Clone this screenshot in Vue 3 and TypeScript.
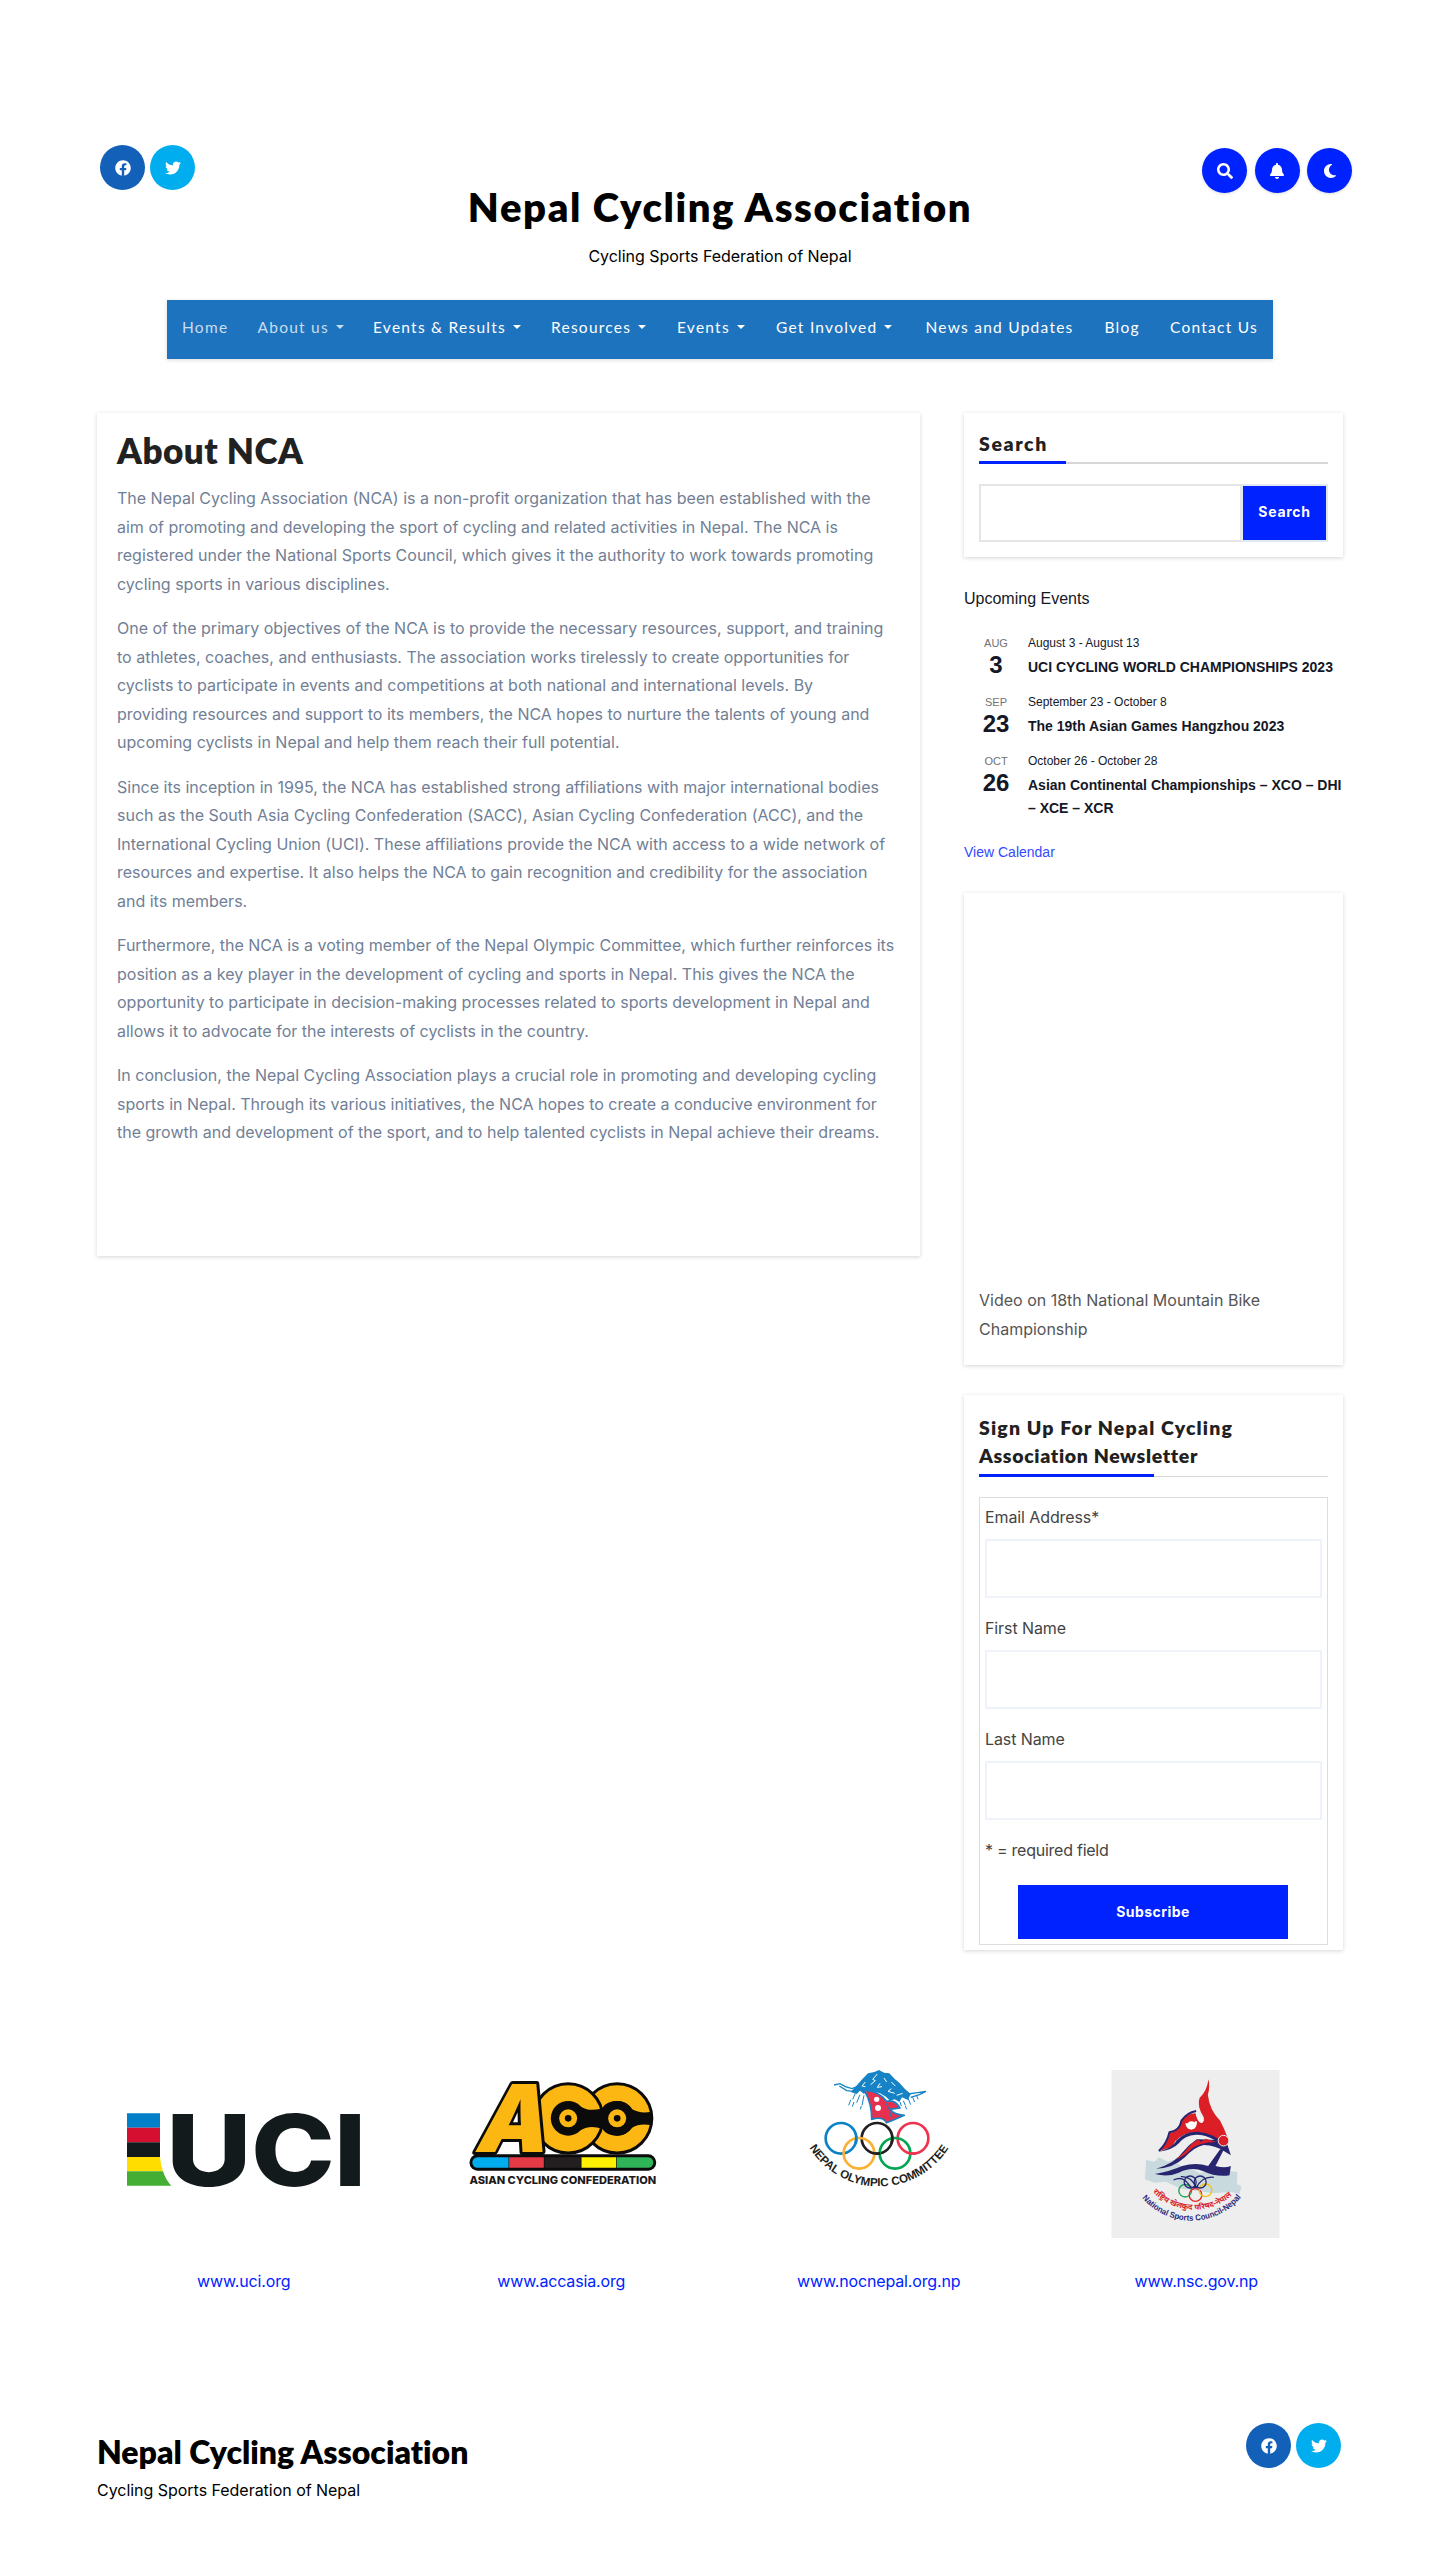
<script setup lang="ts">
interface NavItem { label: string; menu?: boolean; muted?: boolean }
interface EventItem { month: string; day: number; dates: string; title: string }
interface Field { id: string; label: string }

const navItems: NavItem[] = [
  { label: 'Home', muted: true },
  { label: 'About us', menu: true, muted: true },
  { label: 'Events & Results', menu: true },
  { label: 'Resources', menu: true },
  { label: 'Events', menu: true },
  { label: 'Get Involved', menu: true },
  { label: 'News and Updates' },
  { label: 'Blog' },
  { label: 'Contact Us' },
]

const paragraphs: string[][] = [
  [
    'The Nepal Cycling Association (NCA) is a non-profit organization that has been established with the',
    'aim of promoting and developing the sport of cycling and related activities in Nepal. The NCA is',
    'registered under the National Sports Council, which gives it the authority to work towards promoting',
    'cycling sports in various disciplines.',
  ],
  [
    'One of the primary objectives of the NCA is to provide the necessary resources, support, and training',
    'to athletes, coaches, and enthusiasts. The association works tirelessly to create opportunities for',
    'cyclists to participate in events and competitions at both national and international levels. By',
    'providing resources and support to its members, the NCA hopes to nurture the talents of young and',
    'upcoming cyclists in Nepal and help them reach their full potential.',
  ],
  [
    'Since its inception in 1995, the NCA has established strong affiliations with major international bodies',
    'such as the South Asia Cycling Confederation (SACC), Asian Cycling Confederation (ACC), and the',
    'International Cycling Union (UCI). These affiliations provide the NCA with access to a wide network of',
    'resources and expertise. It also helps the NCA to gain recognition and credibility for the association',
    'and its members.',
  ],
  [
    'Furthermore, the NCA is a voting member of the Nepal Olympic Committee, which further reinforces its',
    'position as a key player in the development of cycling and sports in Nepal. This gives the NCA the',
    'opportunity to participate in decision-making processes related to sports development in Nepal and',
    'allows it to advocate for the interests of cyclists in the country.',
  ],
  [
    'In conclusion, the Nepal Cycling Association plays a crucial role in promoting and developing cycling',
    'sports in Nepal. Through its various initiatives, the NCA hopes to create a conducive environment for',
    'the growth and development of the sport, and to help talented cyclists in Nepal achieve their dreams.',
  ],
]

const events: EventItem[] = [
  { month: 'AUG', day: 3, dates: 'August 3 - August 13', title: 'UCI CYCLING WORLD CHAMPIONSHIPS 2023' },
  { month: 'SEP', day: 23, dates: 'September 23 - October 8', title: 'The 19th Asian Games Hangzhou 2023' },
  { month: 'OCT', day: 26, dates: 'October 26 - October 28', title: 'Asian Continental Championships – XCO – DHI – XCE – XCR' },
]

const fields: Field[] = [
  { id: 'email', label: 'Email Address*' },
  { id: 'first', label: 'First Name' },
  { id: 'last', label: 'Last Name' },
]

const icons = {
  facebook: 'M504 256C504 119 393 8 256 8S8 119 8 256c0 123.78 90.69 226.38 209.25 245V327.69h-63V256h63v-54.64c0-62.15 37-96.48 93.67-96.48 27.14 0 55.52 4.84 55.52 4.84v61h-31.28c-30.8 0-40.41 19.12-40.41 38.73V256h68.78l-11 71.69h-57.78V501C413.31 482.38 504 379.78 504 256z',
  twitter: 'M459.37 151.716c.325 4.548.325 9.097.325 13.645 0 138.72-105.583 298.558-298.558 298.558-59.452 0-114.68-17.219-161.137-47.106 8.447.974 16.568 1.299 25.34 1.299 49.055 0 94.213-16.568 130.274-44.832-46.132-.975-84.792-31.188-98.112-72.772 6.498.974 12.995 1.624 19.818 1.624 9.421 0 18.843-1.3 27.614-3.573-48.081-9.747-84.143-51.98-84.143-102.985v-1.299c13.969 7.797 30.214 12.67 47.431 13.319-28.264-18.843-46.781-51.005-46.781-87.391 0-19.492 5.197-37.36 14.294-52.954 51.655 63.675 129.3 105.258 216.365 109.807-1.624-7.797-2.599-15.918-2.599-24.04 0-57.828 46.782-104.934 104.934-104.934 30.213 0 57.502 12.67 76.67 33.137 23.715-4.548 46.456-13.32 66.599-25.34-7.798 24.366-24.366 44.833-46.132 57.827 21.117-2.273 41.584-8.122 60.426-16.243-14.292 20.791-32.161 39.308-52.628 54.253z',
  search: 'M505 442.7L405.3 343c-4.5-4.5-10.6-7-17-7H372c27.6-35.3 44-79.7 44-128C416 93.1 322.9 0 208 0S0 93.1 0 208s93.1 208 208 208c48.3 0 92.7-16.4 128-44v16.3c0 6.4 2.5 12.5 7 17l99.7 99.7c9.4 9.4 24.6 9.4 33.9 0l28.3-28.3c9.4-9.4 9.4-24.6.1-34zM208 336c-70.7 0-128-57.2-128-128 0-70.7 57.2-128 128-128 70.7 0 128 57.2 128 128 0 70.7-57.2 128-128 128z',
  bell: 'M224 512c35.32 0 63.97-28.65 63.97-64H160.03c0 35.35 28.65 64 63.97 64zm215.39-149.71c-19.32-20.76-55.47-51.99-55.47-154.29 0-77.7-54.48-139.9-127.94-155.16V32c0-17.67-14.32-32-31.98-32s-31.98 14.33-31.98 32v20.84C118.56 68.1 64.08 130.3 64.08 208c0 102.3-36.15 133.53-55.47 154.29-6 6.45-8.66 14.16-8.61 21.71.11 16.4 12.98 32 32.1 32h383.8c19.12 0 32-15.6 32.1-32 .05-7.55-2.61-15.27-8.61-21.71z',
  moon: 'M223.5 32C100 32 0 132.3 0 256S100 480 223.5 480c60.6 0 115.5-24.2 155.8-63.4c5-4.9 6.3-12.5 3.1-18.7s-10.1-9.7-17-8.5c-9.8 1.7-19.8 2.6-30.1 2.6c-96.9 0-175.5-78.8-175.5-176c0-65.8 36-123.1 89.3-153.3c6.1-3.5 9.2-10.5 7.7-17.3s-7.3-11.9-14.3-12.5c-6.3-.5-12.6-.8-19-.8z',
}
</script>

<template>
  <div class="page">
    <header class="header">
      <div class="social">
        <a class="circle fb"><svg viewBox="0 0 512 512"><path :d="icons.facebook" /></svg></a>
        <a class="circle tw"><svg viewBox="0 0 512 512"><path :d="icons.twitter" /></svg></a>
      </div>
      <div class="brand">
        <h1 class="brand-name">Nepal Cycling Association</h1>
        <p class="brand-tag">Cycling Sports Federation of Nepal</p>
      </div>
      <div class="tools">
        <a class="circle act"><svg viewBox="0 0 512 512"><path :d="icons.search" /></svg></a>
        <a class="circle act"><svg viewBox="0 0 448 512"><path :d="icons.bell" /></svg></a>
        <a class="circle act"><svg viewBox="0 0 384 512"><path :d="icons.moon" /></svg></a>
      </div>
    </header>

    <nav class="nav">
      <a v-for="item in navItems" :key="item.label" :class="{ muted: item.muted }">
        {{ item.label }}<i v-if="item.menu" class="caret"></i>
      </a>
    </nav>

    <main class="main">
      <article class="card article">
        <h2>About NCA</h2>
        <p v-for="(lines, i) in paragraphs" :key="i">
          <span v-for="line in lines" :key="line">{{ line }}</span>
        </p>
      </article>

      <aside class="side">
        <section class="card search">
          <h3 class="widget-title"><span>Search</span></h3>
          <form class="search-form" @submit.prevent>
            <input type="text" aria-label="Search" />
            <button>Search</button>
          </form>
        </section>

        <section class="events">
          <h4>Upcoming Events</h4>
          <div v-for="ev in events" :key="ev.title" class="event">
            <div class="when">
              <span class="month">{{ ev.month }}</span>
              <span class="day">{{ ev.day }}</span>
            </div>
            <div class="what">
              <span class="dates">{{ ev.dates }}</span>
              <a class="title">{{ ev.title }}</a>
            </div>
          </div>
          <a class="calendar">View Calendar</a>
        </section>

        <section class="card video">
          <p>Video on 18th National Mountain Bike<br />Championship</p>
        </section>

        <section class="card newsletter">
          <h3 class="widget-title thin"><span class="l1">Sign Up For Nepal Cycling</span><span class="l2">Association Newsletter</span></h3>
          <form class="signup" @submit.prevent>
            <div v-for="f in fields" :key="f.id" class="field">
              <label :for="f.id">{{ f.label }}</label>
              <input :id="f.id" type="text" />
            </div>
            <div class="required">* = required field</div>
            <button>Subscribe</button>
          </form>
        </section>
      </aside>
    </main>

    <section class="partners">
      <div class="partner">
        <svg viewBox="-3 30 810 504">
          <path fill="#0080c9" d="M51 160h99v43H51z" />
          <path fill="#d50f2f" d="M51 203h99v44H51z" />
          <path fill="#121a1c" d="M51 247h99v44H51z" />
          <path fill="#ffdd00" d="M51 291h99q2 24 9 43H51z" />
          <path fill="#43ae33" d="M51 334h108q8 26 25 43H51z" />
          <g class="uci">
            <text x="168" y="377" textLength="257" lengthAdjust="spacingAndGlyphs">U</text>
            <text x="423" y="377" textLength="252" lengthAdjust="spacingAndGlyphs">C</text>
            <text x="671" y="377" textLength="98" lengthAdjust="spacingAndGlyphs">I</text>
          </g>
        </svg>
        <a>www.uci.org</a>
      </div>

      <div class="partner acc-link">
        <svg viewBox="-70.5 30 810 504">
          <g stroke="#0b0b0b" stroke-width="9" fill="#fdb713">
            <circle cx="503" cy="175" r="104" />
            <circle cx="356" cy="175" r="104" />
          </g>
          <path d="M395 140Q415 155 456 146Q470 123 503 123Q532 123 548 148Q572 162 607 155V196Q572 188 548 203Q530 227 503 227Q472 227 458 206Q420 194 395 210Z" fill="#0b0b0b" />
          <g v-for="cx in [356, 503]" :key="cx">
            <circle :cx="cx" cy="175" r="52" fill="#0b0b0b" />
            <circle :cx="cx" cy="175" r="27" fill="#fdb713" />
            <circle :cx="cx" cy="175" r="10" fill="#0b0b0b" />
          </g>
          <text class="acc-a" transform="translate(71 275) skewX(-13)" x="0" y="0" textLength="214" lengthAdjust="spacingAndGlyphs">A</text>
          <rect x="60" y="283" width="560" height="49" rx="24" fill="#0b0b0b" />
          <path fill="#00aeef" d="M84 292h93v31H84a15.500 15.500 0 0 1 0-31z" />
          <path fill="#e63946" d="M179 292h104v31H179z" />
          <path fill="#231f20" d="M285 292h109v31H285z" />
          <path fill="#fff200" d="M396 292h104v31H396z" />
          <path fill="#2fb457" d="M502 292h94a15.500 15.500 0 0 1 0 31h-94z" />
          <text class="acc-t" x="60" y="371" textLength="560" lengthAdjust="spacingAndGlyphs">ASIAN CYCLING CONFEDERATION</text>
        </svg>
        <a>www.accasia.org</a>
      </div>

      <div class="partner noc-link">
        <svg viewBox="-108 60 810 504">
          <path fill="#1583c6" d="M212 126L232 104L248 86L264 70L283 66L297 60L312 68L328 70L345 88L358 98L374 116L392 132L384 150L366 142L358 156L344 148L330 152L318 140L300 130L262 120L252 132L240 122L230 132Z" />
          <g fill="none" stroke="#1583c6" stroke-width="4">
            <path d="M162 105L180 101L196 110L216 116L232 110M178 108L200 122L220 124M384 132L412 128L438 124L418 134L392 142" />
          </g>
          <g fill="none" stroke="#1583c6" stroke-width="3">
            <path d="M226 130l-8 18M240 134l-10 24M212 150l-6 16M252 136l-6 30M222 156l-5 14M244 168l-3 10M370 152l6 14M384 144l8 20M398 142l6 14M360 156l4 12M410 136l4 12M376 168l4 10" />
          </g>
          <g fill="none" stroke="#fff" stroke-width="3">
            <path d="M292 72l-14 16 8 4-14 12M312 84l8 12M334 96l12 12M300 100l-8 12 14-2M334 116l-10 8 20 6M350 136l18-6M256 96l-10 12 10 2" />
          </g>
          <path fill="#e6304f" stroke="#1583c6" stroke-width="5" stroke-linejoin="round" d="M253 121Q293 120 320 154Q345 148 360 174L330 178Q342 194 373 196L335 212L319 218Q310 198 275 208Q276 162 253 121Z" />
          <path d="M318 160l10 18 4 22" stroke="#1583c6" stroke-width="3" fill="none" />
          <circle cx="290" cy="148" r="8" fill="#fff" />
          <circle cx="294" cy="174" r="9" fill="#fff" />
          <g fill="none" stroke-width="8">
            <circle cx="183" cy="265" r="46" stroke="#0b82c8" />
            <circle cx="291" cy="265" r="46" stroke="#231f20" />
            <circle cx="399" cy="265" r="46" stroke="#ed334e" />
            <circle cx="237" cy="310" r="46" stroke="#fbb132" />
            <circle cx="345" cy="310" r="46" stroke="#00a651" />
            <path d="M228.500 258A46 46 0 0 1 227 279" stroke="#0b82c8" />
            <path d="M336.500 258A46 46 0 0 1 335 279" stroke="#231f20" />
            <path d="M278 309A46 46 0 0 0 301 310" stroke="#231f20" />
            <path d="M386 309A46 46 0 0 0 408 310" stroke="#ed334e" />
          </g>
          <path id="noc-arc" d="M88 293A246 246 0 0 0 508 290" fill="none" />
          <text class="noc-t"><textPath href="#noc-arc" textLength="498" lengthAdjust="spacingAndGlyphs">NEPAL OLYMPIC COMMITTEE</textPath></text>
        </svg>
        <a>www.nocnepal.org.np</a>
      </div>

      <div class="partner nsc-link">
        <svg viewBox="-115.5 30 810 504">
          <rect x="36" y="30" width="504" height="504" fill="#eeeeee" />
          <path fill="#c8dade" d="M140 300L165 305L178 292L205 305L222 300L245 318L275 325L300 340L335 330L355 345L385 332L414 336L412 372L426 380L420 402L395 396L340 400L290 392L240 385L200 365L165 368L136 358Z" />
          <path fill="#dc1f26" d="M327 58Q332 84 325 104Q330 150 362 182Q374 205 384 232Q384 256 372 256Q350 240 322 222Q282 210 252 225Q225 240 218 262Q200 266 180 273Q204 250 212 218Q238 214 246 182Q262 160 288 160Q296 190 308 188Q316 182 312 170Q292 140 300 114Q322 95 327 58Z" />
          <path fill="#f7f7f7" d="M289 152Q298 175 311 174Q314 188 305 189Q291 185 289 152Z" />
          <path fill="none" stroke="#27256f" stroke-width="6" d="M178 273Q202 252 210 217Q240 213 246 182Q262 158 290 153" />
          <path fill="none" stroke="#f2f2f2" stroke-width="4" d="M186 278Q224 262 230 244Q262 212 318 225" />
          <path fill="#27256f" d="M178 275Q222 262 232 240Q262 212 300 216Q340 220 384 255L394 286L378 276Q350 256 312 255Q286 260 256 292Q220 326 170 326Q226 310 250 276Q270 252 292 238Q320 238 345 240Q318 224 290 224Q255 226 238 250Q220 270 178 275Z" />
          <path fill="#dc1f26" d="M230 298Q256 278 276 252L296 238L304 246L318 236L350 246Q298 246 272 270Q256 288 230 298Z" />
          <path fill="#27256f" d="M166 342Q212 334 248 318Q290 306 326 318L362 268L374 266L348 318Q376 326 394 318L390 346Q350 352 312 334Q276 318 238 338Q206 352 166 342Z" />
          <circle cx="372" cy="242" r="16" fill="#dc1f26" stroke="#eee" stroke-width="3" />
          <circle cx="276" cy="196" r="12" fill="#fff" />
          <path fill="none" stroke="#fff" stroke-width="7" d="M261 190Q264 206 276 205Q290 202 289 184" />
          <g fill="none" stroke-width="4">
            <circle cx="257" cy="392" r="19" stroke="#16a14a" />
            <circle cx="288" cy="405" r="19" stroke="#e02a30" />
            <circle cx="318" cy="391" r="19" stroke="#f2c515" />
            <path stroke="#27256f" d="M222 360Q250 346 268 374Q278 390 296 378M244 350Q275 348 290 382M343 352Q308 348 290 384" />
            <circle cx="272" cy="366" r="18" stroke="#27256f" />
            <circle cx="302" cy="366" r="18" stroke="#27256f" />
          </g>
          <path id="nsc-a" d="M160 396A172 172 0 0 0 408 396" fill="none" />
          <path id="nsc-b" d="M128 414A194 194 0 0 0 428 408" fill="none" />
          <text class="nsc-r"><textPath href="#nsc-a" textLength="262" lengthAdjust="spacingAndGlyphs">राष्ट्रिय खेलकुद परिषद-नेपाल</textPath></text>
          <text class="nsc-n"><textPath href="#nsc-b" textLength="338" lengthAdjust="spacingAndGlyphs">National Sports Council-Nepal</textPath></text>
        </svg>
        <a>www.nsc.gov.np</a>
      </div>
    </section>

    <footer class="footer">
      <div>
        <div class="foot-name">Nepal Cycling Association</div>
        <p class="brand-tag">Cycling Sports Federation of Nepal</p>
      </div>
      <div class="social">
        <a class="circle fb"><svg viewBox="0 0 512 512"><path :d="icons.facebook" /></svg></a>
        <a class="circle tw"><svg viewBox="0 0 512 512"><path :d="icons.twitter" /></svg></a>
      </div>
    </footer>
  </div>
</template>

<style>
body {
  background: #fff;
}
</style>

<style scoped>
.page {
  box-sizing: border-box;
  height: 2551px;
  overflow: hidden;
  padding-top: 145px;
  font: 16px/28.5px Inter, sans-serif;
  font-variant-ligatures: none;
  color: #000;
}
.page *,
.page *::after {
  box-sizing: border-box;
}
h1, h2, h3, h4, p {
  margin: 0;
}
h1, h2, h3, .foot-name, .nav {
  font-family: Lato, sans-serif;
}
.header {
  width: 1255px;
  height: 155px;
  margin-left: 100px;
  display: grid;
  grid-template-columns: 360px 1fr 375px;
}
.social {
  display: flex;
  gap: 5px;
}
.tools {
  display: flex;
  justify-content: flex-end;
  gap: 7.5px;
  padding: 3px 3px 0 0;
}
.circle {
  width: 45px;
  height: 45px;
  border-radius: 50%;
  display: flex;
  align-items: center;
  justify-content: center;
}
.circle svg {
  width: 16px;
  height: 16px;
  fill: #fff;
}
.fb { background: #1260b8; }
.tw { background: #00adef; }
.act {
  background: #0022ff;
  box-shadow: 0 1px 3px rgba(0, 0, 0, 0.15);
}
.brand {
  text-align: center;
  padding-top: 37px;
}
.brand-name {
  font-size: 40px;
  line-height: 50px;
  font-weight: 800;
  letter-spacing: 1.6px;
  white-space: nowrap;
}
.brand-tag {
  line-height: 28px;
  letter-spacing: -0.03px;
}
.brand .brand-tag {
  margin-top: 10px;
}
.nav {
  width: 1106px;
  height: 59px;
  margin: 0 0 0 167px;
  background: #1e73be;
  box-shadow: 0 1px 4px rgba(0, 0, 0, 0.15);
  display: grid;
  grid-template-columns: 75.5px 115.5px 178px 126px 99px 149.5px 179px 65.5px 118px;
  font-size: 15.5px;
  line-height: 55px;
  letter-spacing: 1.25px;
  color: #fff;
}
.nav a {
  padding-left: 15px;
  white-space: nowrap;
}
.nav .muted {
  color: #c9ddee;
}
.caret {
  display: inline-block;
  margin-left: 7px;
  vertical-align: 4px;
  border: 4.5px solid transparent;
  border-top-color: currentColor;
  border-bottom: 0;
}
.main {
  margin: 54px 97px 0;
  display: flex;
  justify-content: space-between;
  align-items: flex-start;
}
.card {
  background: #fff;
  box-shadow: 0 1px 4px rgba(0, 0, 0, 0.17);
}
.article {
  width: 823px;
  height: 843px;
  padding: 17px 20px 0;
  color: #718096;
}
.article h2 {
  font-size: 35px;
  line-height: 40px;
  font-weight: 800;
  letter-spacing: 0.5px;
  color: #212121;
  margin-bottom: 14px;
}
.article p {
  margin-bottom: 16px;
}
.article span {
  display: block;
  white-space: nowrap;
}
.side {
  width: 379px;
}
.side .card {
  padding: 15px 15px 0;
}
.widget-title {
  position: relative;
  font-size: 19.5px;
  line-height: 28px;
  font-weight: 800;
  color: #212121;
  padding: 1.5px 0 4.5px;
  border-bottom: 2px solid #d7d7d7;
  letter-spacing: 1.6px;
}
.widget-title::after {
  content: '';
  position: absolute;
  left: 0;
  bottom: -2px;
  width: 25%;
  height: 3px;
  background: #0022ff;
}
.widget-title.thin {
  padding: 4px 0 6px;
  border-bottom-width: 1px;
}
.widget-title.thin::after {
  width: 50%;
  bottom: -1px;
}
.widget-title span {
  display: block;
}
.widget-title .l1 { letter-spacing: 1.15px; }
.widget-title .l2 { letter-spacing: 0.65px; }
.side .search {
  height: 144px;
}
.search-form {
  display: flex;
  margin-top: 20px;
  height: 58px;
}
input {
  display: block;
  background: #fff;
  border-radius: 0;
  padding: 0 12px;
  outline: 0;
}
.search-form input {
  width: 263px;
  border: 2px solid #e5e5e5;
}
button {
  font: 700 14px/20px Inter, sans-serif;
  color: #fff;
  background: #0022ff;
  border: 0;
  border-radius: 0;
  padding: 0;
}
.search-form button {
  flex: 1;
  border: 2px solid #e2e8f0;
  border-left-width: 1px;
  letter-spacing: 0.7px;
  padding-bottom: 2px;
}
.events {
  font-family: "Liberation Sans", Arial, sans-serif;
  color: #141827;
  margin-top: 29px;
  height: 307px;
}
.events h4 {
  font-weight: 400;
  font-size: 16px;
  line-height: 26px;
  margin-bottom: 21px;
}
.event {
  display: flex;
  margin-bottom: 13px;
}
.when {
  width: 64px;
  text-align: center;
}
.when span,
.what > * {
  display: block;
}
.month {
  font-size: 11px;
  line-height: 20px;
  color: #727272;
}
.day {
  font-size: 24px;
  line-height: 24px;
  font-weight: 700;
}
.what {
  flex: 1;
  margin-right: -4px;
}
.dates {
  font-size: 12px;
  line-height: 20px;
}
.title {
  margin-top: 3px;
  font-size: 14px;
  line-height: 23px;
  font-weight: 700;
}
.calendar {
  display: block;
  margin-top: 20.5px;
  font-size: 14px;
  line-height: 22px;
  color: #334aff;
}
.side .video {
  height: 472px;
  padding-top: 393px;
  color: #555;
}
.side .newsletter {
  margin-top: 30px;
  height: 555px;
}
.signup {
  margin-top: 20px;
  height: 448px;
  border: 1px solid #ddd;
  padding: 5px;
  color: #444;
}
.field {
  height: 111px;
}
.field label {
  display: block;
  line-height: 28px;
  letter-spacing: -0.1px;
}
.field input {
  width: 100%;
  height: 59px;
  margin-top: 8px;
  border: 2px solid #eef2fb;
}
.required {
  line-height: 28px;
  letter-spacing: -0.25px;
}
.signup button {
  display: block;
  width: 270px;
  height: 54px;
  margin: 21px 0 0 33px;
  padding-bottom: 1px;
  letter-spacing: 0.45px;
}
.partners {
  width: 1270px;
  margin: 120px 0 0 85px;
  display: grid;
  grid-template-columns: repeat(4, 1fr);
}
.partner {
  display: flex;
  flex-direction: column;
  align-items: center;
}
.partner svg {
  width: 270px;
  height: 168px;
  overflow: visible;
}
.partner a {
  margin-top: 29px;
  line-height: 28px;
  color: #0022ff;
  letter-spacing: -0.15px;
}
.uci text {
  font: 800 297px Inter, sans-serif;
  fill: #121a1c;
}
.acc-a {
  font: 900 280px Inter, sans-serif;
  fill: #fdb713;
  stroke: #0b0b0b;
  stroke-width: 18px;
  paint-order: stroke;
  stroke-linejoin: round;
}
.acc-t {
  font: 800 32px Inter, sans-serif;
  fill: #1c1a1b;
}
.noc-t {
  font: 700 35px "Liberation Sans", sans-serif;
  fill: #231f20;
}
.nsc-r {
  font: 700 23px "Noto Sans", "Noto Sans Devanagari", sans-serif;
  fill: #d8232a;
}
.nsc-n {
  font: 700 25px "Liberation Sans", sans-serif;
  fill: #2b2a7c;
}
.footer {
  display: flex;
  justify-content: space-between;
  margin: 128px 99px 0 97px;
}
.foot-name {
  font-size: 32px;
  line-height: 40px;
  font-weight: 800;
  margin: 9px 0 4px;
}
</style>
